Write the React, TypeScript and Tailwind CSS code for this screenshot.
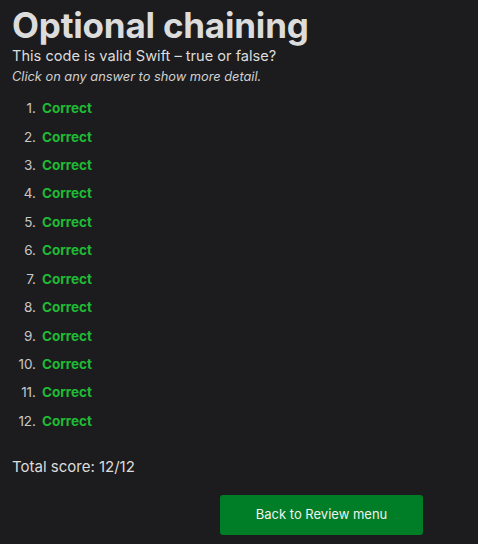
export default function App() {
  const answers = Array.from({ length: 12 }, (_, i) => i + 1);

  return (
    <main
      className="min-h-[544px] bg-[#1c1c1e] text-[#dedede] px-3"
      style={{ fontFamily: "Inter, 'Noto Sans', sans-serif" }}
    >
      <h1 className="text-[35px] font-bold leading-[40px] tracking-[-0.2px] pt-[5px] text-[#dcdcdc]">Optional chaining</h1>
      <p className="text-[14.6px] leading-[22px] text-[#dcdcdc]">This code is valid Swift – true or false?</p>
      <p className="text-[12.8px] italic leading-[20px] text-[#d0d0d0]">Click on any answer to show more detail.</p>

      <ol className="mt-[7px] flex flex-col">
        {answers.map((n) => (
          <li key={n} className="flex items-center h-[28.45px] text-[13.5px]">
            <span className="w-[24px] text-right text-[#c8c8c8] font-normal">{n}.</span>
            <span className="ml-[6px] font-bold text-[#1fbb35] cursor-pointer">Correct</span>
          </li>
        ))}
      </ol>

      <p className="mt-[21px] text-[15px] text-[#dcdcdc]">Total score: 12/12</p>

      <div className="mt-[16px] flex">
        <button className="ml-[208px] w-[203px] h-[40px] rounded-[3px] bg-[#007e27] text-[13px] text-[#f0f0f0]">
          Back to Review menu
        </button>
      </div>
    </main>
  );
}
